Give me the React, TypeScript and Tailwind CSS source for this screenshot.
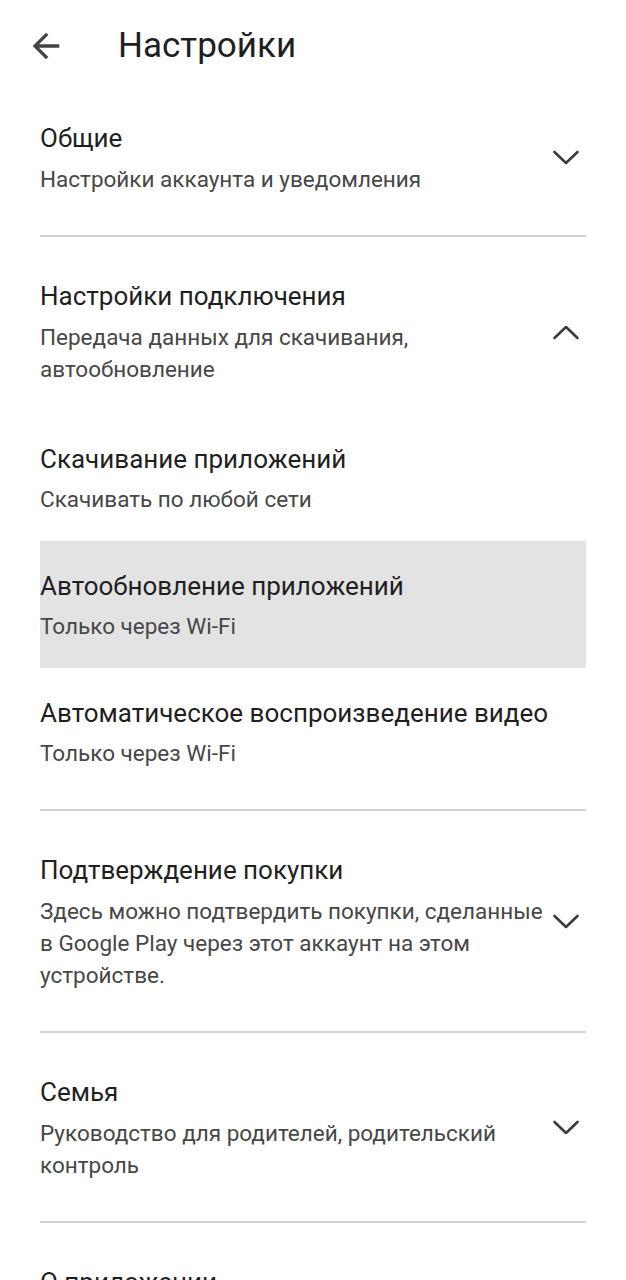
import React from "react";

const font = { fontFamily: "Roboto, 'Noto Sans', Arial, sans-serif" };

function Chevron({ up = false }: { up?: boolean }) {
  return (
    <svg width="28" height="16" viewBox="0 0 28 16" className="mr-[6px] shrink-0" fill="none">
      <path
        d={up ? "M2.5 14 L14 3 L25.5 14" : "M2.5 2 L14 13 L25.5 2"}
        stroke="#3c3c3c"
        strokeWidth="2.6"
        strokeLinecap="round"
        strokeLinejoin="round"
      />
    </svg>
  );
}

function Divider() {
  return <div className="mx-10 h-[2px] bg-[#d2d2d2]" />;
}

function Item({ title, sub, active = false }: { title: string; sub: string; active?: boolean }) {
  return (
    <div className={"mx-10 pt-[27px] pb-[26px] " + (active ? "bg-[#e3e3e3]" : "")}>
      <div className="text-[26px] leading-[36px] text-[#1f1f1f]">{title}</div>
      <div className="mt-[6px] text-[22.5px] leading-[32px] text-[#474747]">{sub}</div>
    </div>
  );
}

function Section({
  title,
  sub,
  up = false,
  className = "pt-[41px] pb-[40px]",
}: {
  title: string;
  sub: React.ReactNode;
  up?: boolean;
  className?: string;
}) {
  return (
    <div className={"mx-10 flex items-center gap-2 " + className}>
      <div className="min-w-0 flex-1">
        <div className="text-[26px] leading-[36px] text-[#1f1f1f]">{title}</div>
        <div className="mt-[7px] whitespace-nowrap text-[22.5px] leading-[32px] text-[#474747]">{sub}</div>
      </div>
      <Chevron up={up} />
    </div>
  );
}

export default function App() {
  return (
    <div className="h-[1280px] w-[626px] overflow-hidden bg-white" style={font}>
      <header className="flex h-[92px] items-center">
        <svg width="40" height="40" viewBox="0 0 24 24" className="ml-[26px]" fill="#444">
          <path d="M20 11H7.83l5.59-5.59L12 4l-8 8 8 8 1.41-1.41L7.83 13H20v-2z" />
        </svg>
        <h1 className="ml-[52px] text-[35px] font-normal text-[#1f1f1f]">Настройки</h1>
      </header>

      <Section title="Общие" sub="Настройки аккаунта и уведомления" className="pt-[28px] pb-[40px]" />
      <Divider />

      <Section
        title="Настройки подключения"
        sub={
          <>
            Передача данных для скачивания,
            <br />
            автообновление
          </>
        }
        up
        className="pt-[41px] pb-[29px]"
      />
      <Item title="Скачивание приложений" sub="Скачивать по любой сети" />
      <Item title="Автообновление приложений" sub="Только через Wi-Fi" active />
      <Item title="Автоматическое воспроизведение видео" sub="Только через Wi-Fi" />
      <div className="h-[14px]" />
      <Divider />

      <Section
        title="Подтверждение покупки"
        sub={
          <>
            Здесь можно подтвердить покупки, сделанные
            <br />в Google Play через этот аккаунт на этом
            <br />
            устройстве.
          </>
        }
      />
      <Divider />

      <Section
        title="Семья"
        sub={
          <>
            Руководство для родителей, родительский
            <br />
            контроль
          </>
        }
      />
      <Divider />

      <div className="mx-10 pt-[41px]">
        <div className="text-[26px] leading-[36px] text-[#1f1f1f]">О приложении</div>
      </div>
    </div>
  );
}
